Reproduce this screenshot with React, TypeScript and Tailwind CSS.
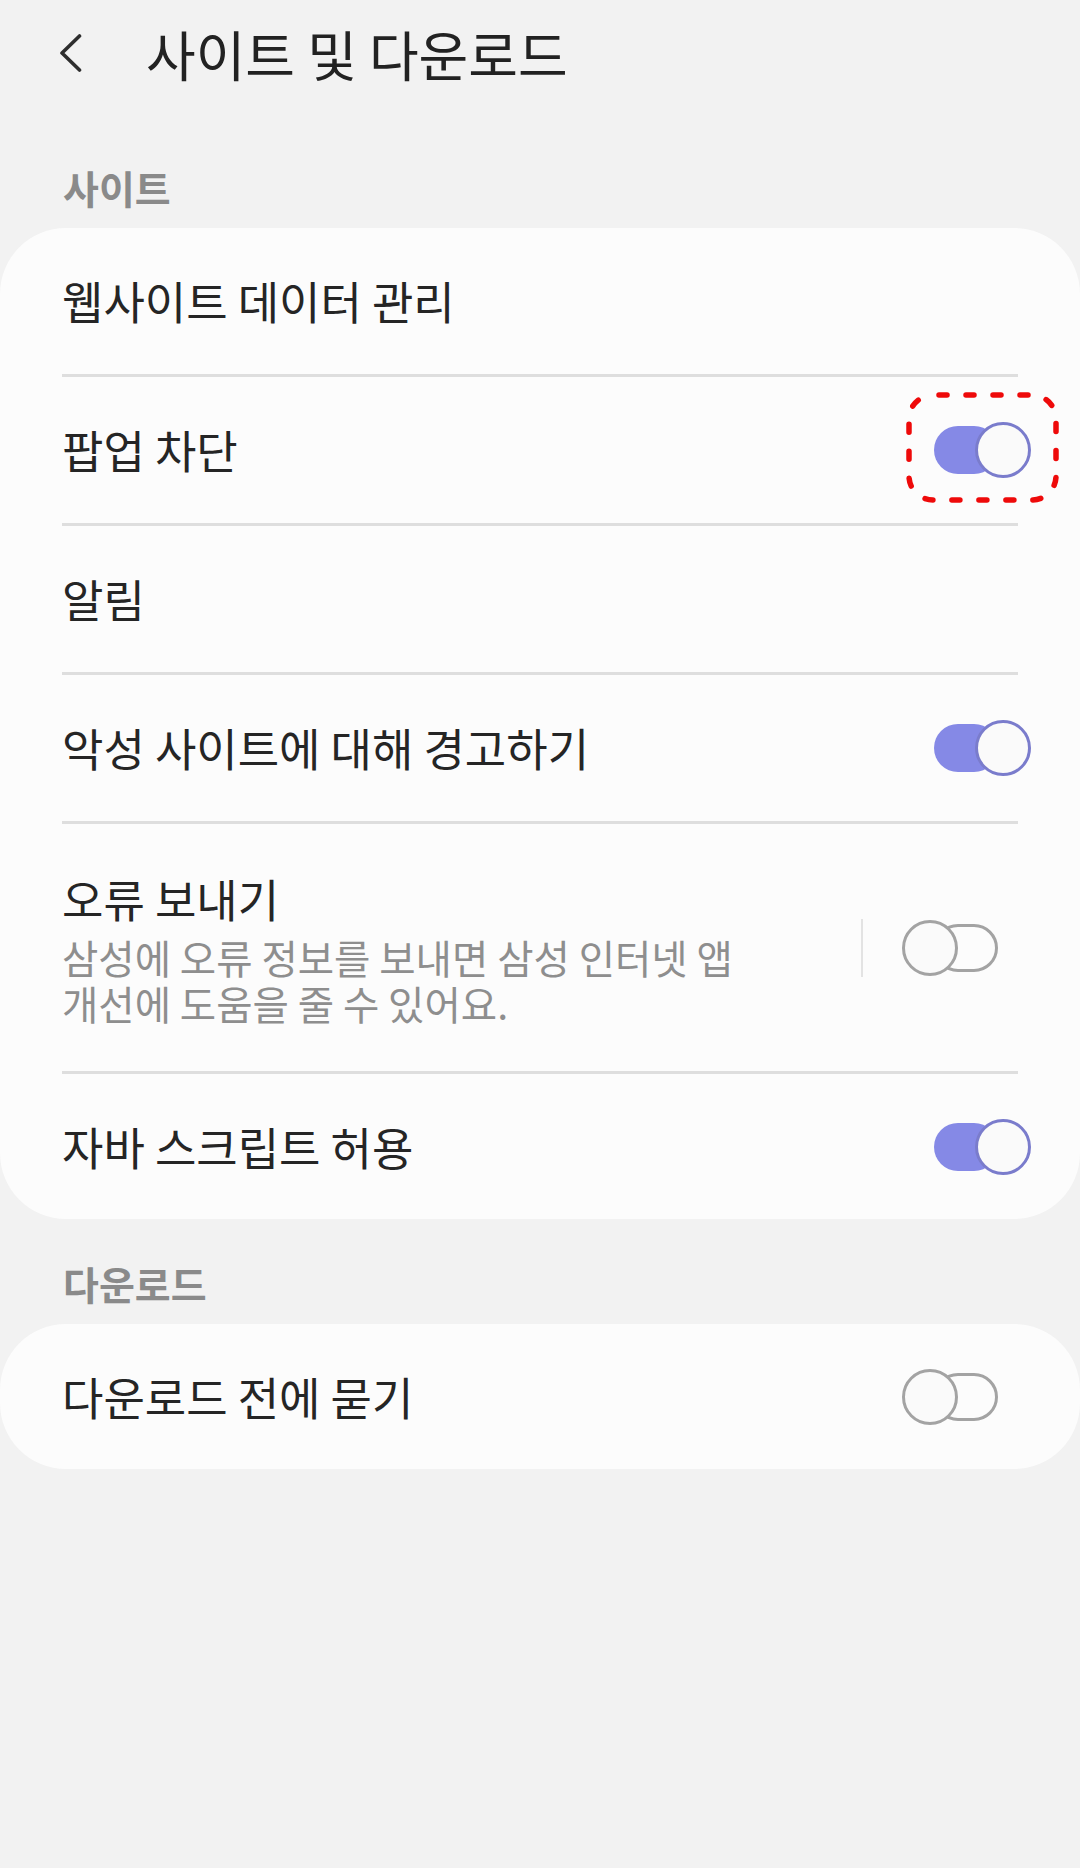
import React from "react";

function Toggle({ on }: { on: boolean }) {
  return (
    <div className="relative w-[130px] h-[58px] shrink-0">
      {on ? (
        <div className="absolute left-[33px] top-[5px] w-[64px] h-[48px] rounded-full bg-[#8589e6]" />
      ) : (
        <div className="absolute left-[33px] top-[5px] w-[64px] h-[48px] rounded-full border-[3px] border-[#a3a3a3] bg-[#fcfcfc]" />
      )}
      {on ? (
        <div className="absolute left-[74px] top-[1px] w-[56px] h-[56px] rounded-full bg-[#fafafa] border-[3px] border-[#7a7ccc]" />
      ) : (
        <div className="absolute left-[1px] top-[1px] w-[56px] h-[56px] rounded-full bg-[#fafafa] border-[3px] border-[#a3a3a3]" />
      )}
    </div>
  );
}

function Divider() {
  return <div className="h-[3px] mx-[62px] bg-[#dedede]" />;
}

function Row({
  label,
  toggle,
  h = "h-[146px]",
  highlight = false,
}: {
  label: string;
  toggle?: boolean;
  h?: string;
  highlight?: boolean;
}) {
  return (
    <div className={`relative flex items-center ${h} pl-[62px] pr-[49px]`}>
      <span className="text-[45px] leading-[56px] text-[#252525] whitespace-nowrap">{label}</span>
      {toggle !== undefined && (
        <div className="ml-auto">
          <Toggle on={toggle} />
        </div>
      )}
      {highlight && (
        <svg
          className="absolute right-[21px] top-[15px]"
          width="153"
          height="111"
          viewBox="0 0 153 111"
        >
          <rect
            x="3"
            y="3"
            width="147"
            height="105"
            rx="24"
            ry="24"
            fill="none"
            stroke="#ee0a0a"
            strokeWidth="5.5"
            strokeDasharray="8 19"
            strokeLinecap="round"
            strokeDashoffset="-6"
          />
        </svg>
      )}
    </div>
  );
}

export default function App() {
  return (
    <div className="w-[1080px] h-[1868px] bg-[#f2f2f2] font-['Noto_Sans_CJK_KR','Noto_Sans',sans-serif]">
      {/* Header */}
      <div className="flex items-center h-[112px] pl-[58px]">
        <svg width="26" height="42" viewBox="0 0 26 42" className="-mt-[3px]">
          <path
            d="M21.5 2 L4 19 L21.5 36"
            fill="none"
            stroke="#2e2e2e"
            strokeWidth="3.6"
            strokeLinecap="round"
            strokeLinejoin="round"
          />
        </svg>
        <h1 className="ml-[62px] -mt-[4px] text-[54px] leading-[64px] font-normal text-[#222222] whitespace-nowrap">
          사이트 및 다운로드
        </h1>
      </div>

      {/* Section: 사이트 */}
      <div className="h-[116px] flex items-end pb-[16px] pl-[63px]">
        <span className="text-[39px] leading-[50px] font-bold text-[#8a8a8a]">사이트</span>
      </div>

      <div className="bg-[#fcfcfc] rounded-[66px] overflow-hidden">
        <Row label="웹사이트 데이터 관리" />
        <Divider />
        <Row label="팝업 차단" toggle={true} highlight />
        <Divider />
        <Row label="알림" />
        <Divider />
        <Row label="악성 사이트에 대해 경고하기" toggle={true} />
        <Divider />
        <div className="flex items-center h-[247px] pl-[62px] pr-[49px]">
          <div className="flex flex-col">
            <span className="text-[45px] leading-[58px] text-[#252525] whitespace-nowrap">오류 보내기</span>
            <span className="mt-[6px] text-[39.5px] leading-[46px] text-[#8e8e8e] whitespace-nowrap">
              삼성에 오류 정보를 보내면 삼성 인터넷 앱
              <br />
              개선에 도움을 줄 수 있어요.
            </span>
          </div>
          <div className="ml-auto w-[2px] h-[58px] bg-[#e3e3e3]" />
          <div className="ml-[38px]">
            <Toggle on={false} />
          </div>
        </div>
        <Divider />
        <Row label="자바 스크립트 허용" toggle={true} h="h-[145px]" />
      </div>

      {/* Section: 다운로드 */}
      <div className="h-[105px] flex items-end pb-[16px] pl-[63px]">
        <span className="text-[39px] leading-[50px] font-bold text-[#8a8a8a]">다운로드</span>
      </div>

      <div className="bg-[#fcfcfc] rounded-[66px] overflow-hidden">
        <Row label="다운로드 전에 묻기" toggle={false} h="h-[145px]" />
      </div>
    </div>
  );
}
